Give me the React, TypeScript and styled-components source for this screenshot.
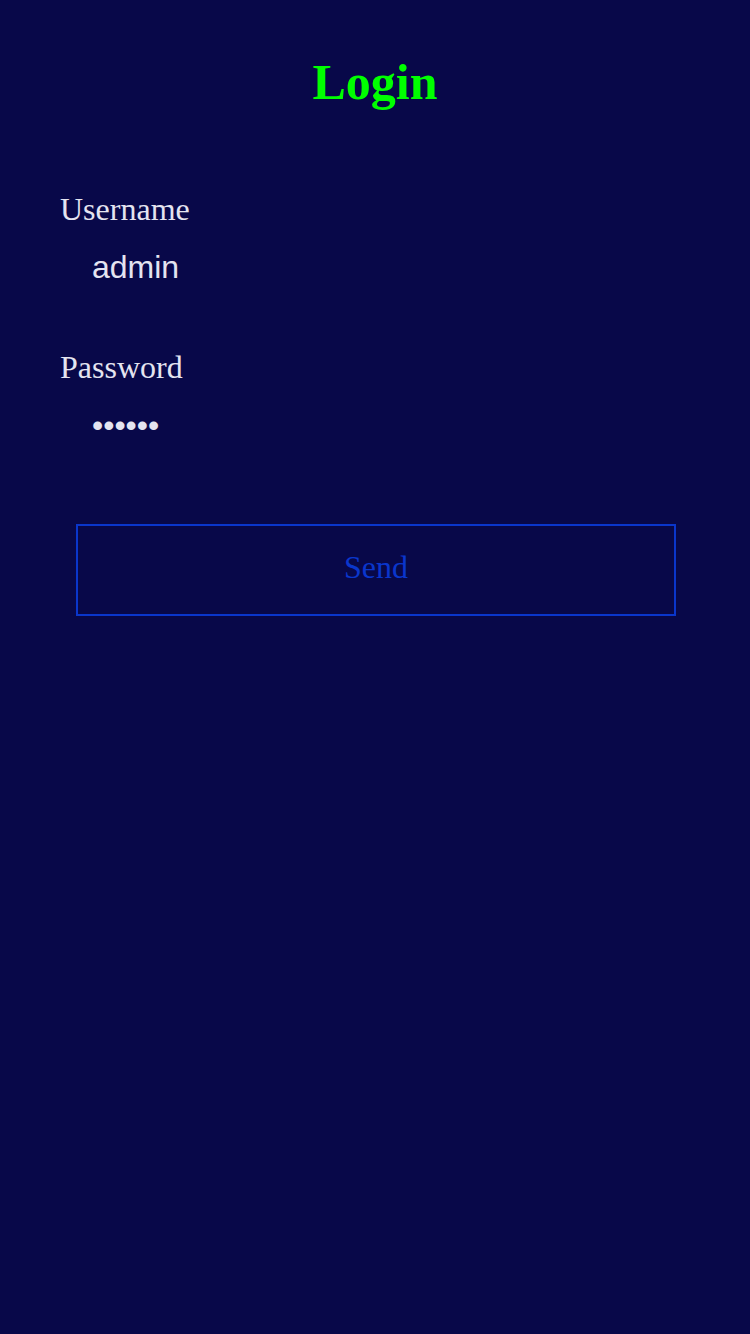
import React from "react";
import styled, { createGlobalStyle } from "styled-components";

const Global = createGlobalStyle`
  html, body {
    margin: 0;
    padding: 0;
    background: #080849;
  }
  body {
    min-height: 1334px;
    font-family: "Liberation Serif", "Times New Roman", serif;
  }
`;

const Page = styled.div`
  box-sizing: border-box;
  width: 750px;
  min-height: 1334px;
  padding: 55px 60px 0;
  background: #080849;
`;

const Title = styled.h1`
  margin: 0 0 81px;
  font-family: "Liberation Serif", "Times New Roman", serif;
  font-weight: 700;
  font-size: 50px;
  line-height: 55px;
  text-align: center;
  color: #00ff00;
`;

const Form = styled.form`
  display: flex;
  flex-direction: column;
  margin: 0;
`;

const Field = styled.div<{ $last?: boolean }>`
  display: flex;
  flex-direction: column;
  margin-bottom: ${(p) => (p.$last ? "80px" : "63px")};
`;

const Label = styled.label`
  font-family: "Liberation Serif", "Times New Roman", serif;
  font-size: 32px;
  line-height: 37px;
  color: #e4e4f0;
`;

const Input = styled.input`
  box-sizing: border-box;
  margin-top: 21px;
  height: 37px;
  padding: 0 0 0 32px;
  border: none;
  outline: none;
  background: transparent;
  font-family: "Liberation Sans", Arial, sans-serif;
  font-size: 32px;
  line-height: 37px;
  color: #e4e4f0;
`;

const SendButton = styled.button`
  box-sizing: border-box;
  width: 600px;
  height: 92px;
  margin-left: 16px;
  padding: 0 0 6px;
  border: 2px solid #0a36cc;
  background: transparent;
  font-family: "Liberation Serif", "Times New Roman", serif;
  font-size: 32px;
  color: #0a36cc;
  cursor: pointer;
`;

export default function App() {
  return (
    <>
      <Global />
      <Page>
        <Title>Login</Title>
        <Form onSubmit={(e) => e.preventDefault()}>
          <Field>
            <Label htmlFor="username">Username</Label>
            <Input id="username" type="text" defaultValue="admin" />
          </Field>
          <Field $last>
            <Label htmlFor="password">Password</Label>
            <Input id="password" type="password" defaultValue="123456" />
          </Field>
          <SendButton type="submit">Send</SendButton>
        </Form>
      </Page>
    </>
  );
}
